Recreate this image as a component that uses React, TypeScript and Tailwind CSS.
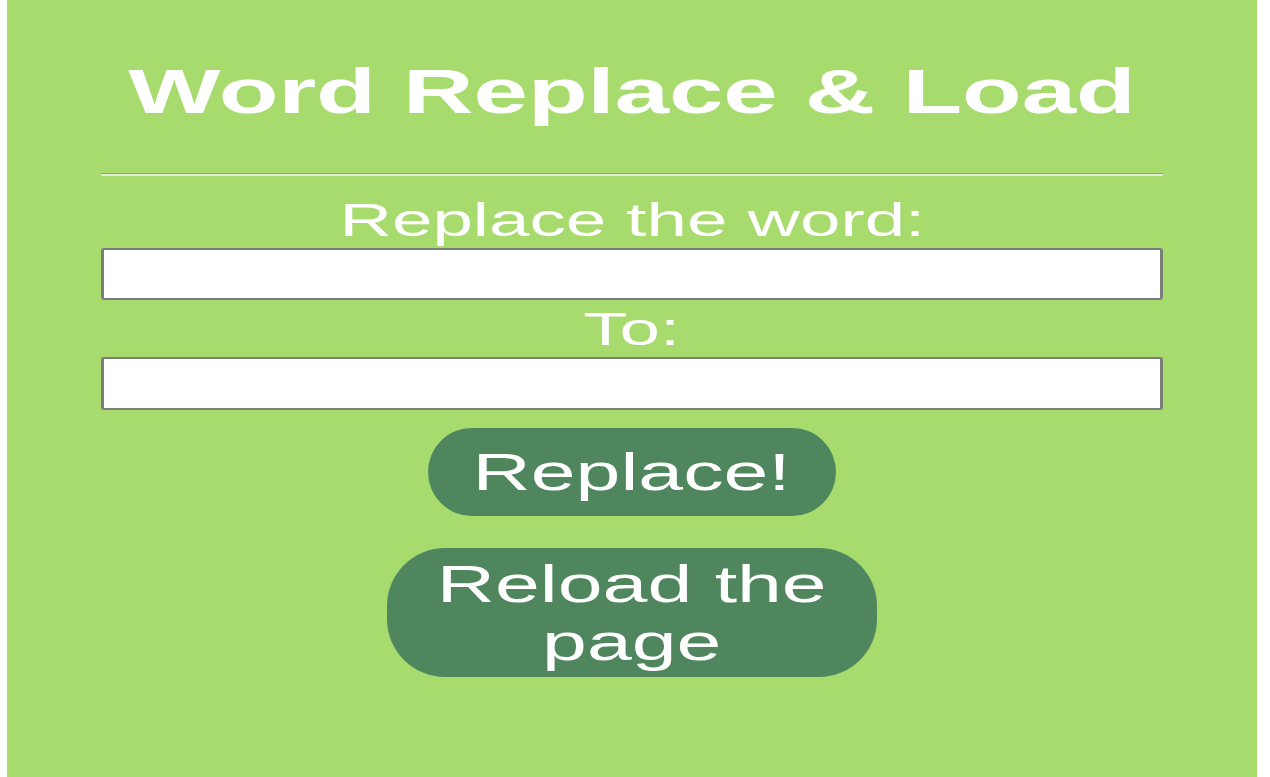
import React from 'react';

// Popup panel: heading, two text fields and the two action buttons
const Label = ({ children }: { children: React.ReactNode }) => (
  <span className="inline-block scale-x-[1.58] text-[46px] leading-none text-white">{children}</span>
);

export default function App() {
  return (
    <div className="min-h-screen bg-white pl-[7px] pr-[13px] font-['Liberation_Sans',Arial,sans-serif]">
      <div className="h-[777px] bg-[#a7db6e] flex flex-col items-center px-[94px]">
        <h1 className="mt-[60px] text-[63px] font-bold leading-none text-white">
          <span className="inline-block scale-x-[1.55]">Word Replace &amp; Load</span>
        </h1>

        <div className="mt-[50px] h-[3px] w-full border-t border-[#8f9f86] bg-[#e4ecdc]" />

        <div className="mt-[21px]">
          <Label>Replace the word:</Label>
        </div>
        <input
          type="text"
          className="mt-[5px] h-[52px] w-full rounded-[3px] border-y-2 border-x-[3px] border-[#7b7d78] bg-white outline-none"
        />

        <div className="mt-[6px]">
          <Label>To:</Label>
        </div>
        <input
          type="text"
          className="mt-[5px] h-[53px] w-full rounded-[3px] border-y-2 border-x-[3px] border-[#7b7d78] bg-white outline-none"
        />

        <button className="mt-[18px] flex h-[88px] w-[408px] items-center justify-center rounded-full bg-[#4f865d] text-[52px] leading-none text-white">
          <span className="inline-block scale-x-[1.55]">Replace!</span>
        </button>

        <button className="mt-[32px] flex h-[129px] w-[490px] items-center justify-center rounded-[58px] bg-[#4f865d] text-[52px] leading-[58px] text-white">
          <span className="inline-block scale-x-[1.55] text-center">
            Reload the
            <br />
            page
          </span>
        </button>
      </div>
    </div>
  );
}
